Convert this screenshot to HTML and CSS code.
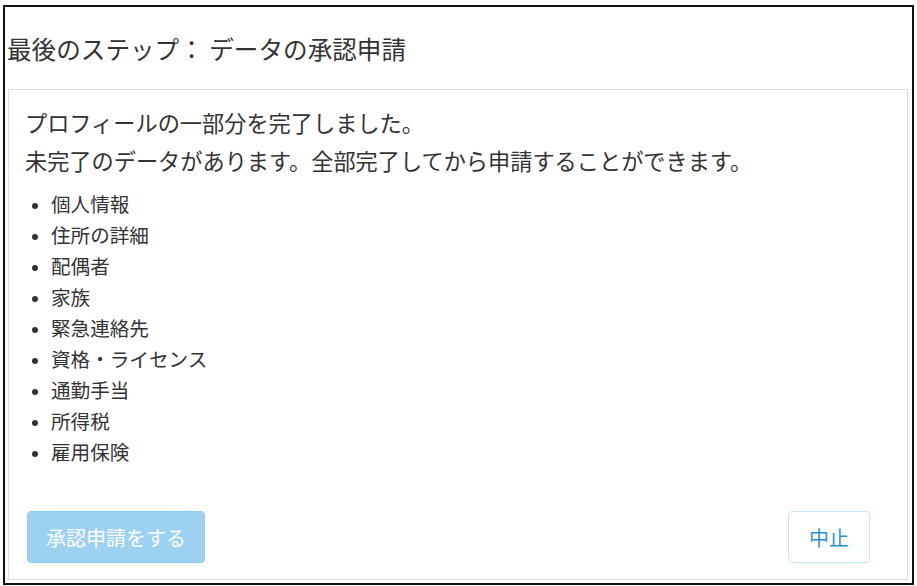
FILE: index.html
```html
<!DOCTYPE html>
<html lang="ja">
<head>
    <meta charset="UTF-8">
    <meta name="viewport" content="width=device-width, initial-scale=1.0">
    <title>最後のステップ</title>
    <link rel="stylesheet" href="styles.css">
</head>
<body>
    <div class="frame">
        <h2 class="title">最後のステップ： データの承認申請</h2>
        <div class="panel">
            <p class="msg">プロフィールの一部分を完了しました。</p>
            <p class="msg">未完了のデータがあります。全部完了してから申請することができます。</p>
            <ul class="missing">
                <li>個人情報</li>
                <li>住所の詳細</li>
                <li>配偶者</li>
                <li>家族</li>
                <li>緊急連絡先</li>
                <li>資格・ライセンス</li>
                <li>通勤手当</li>
                <li>所得税</li>
                <li>雇用保険</li>
            </ul>
            <div class="actions">
                <button type="button" class="primary" disabled>承認申請をする</button>
                <button type="button" class="secondary">中止</button>
            </div>
        </div>
    </div>
</body>
</html>
```

FILE: styles.css
```css
body {
    font-family: "Noto Sans CJK JP", "Noto Sans", sans-serif;
    color: #333;
    background-color: #fff;
    margin: 0;
}
.frame {
    margin: 5px 3px 0 3px;
    height: 580px;
    box-sizing: border-box;
    border: 2px solid #111;
    padding: 0 4px 3px 3px;
    display: flex;
    flex-direction: column;
}
.title {
    height: 82px;
    margin: 0 0 0 -1px;
    display: flex;
    align-items: center;
    font-size: 24.6px;
    font-weight: normal;
    color: #333;
}
.panel {
    flex: 1;
    border: 1px solid #ddd;
    padding: 13px 0 16px 16px;
    display: flex;
    flex-direction: column;
}
.msg {
    margin: 0;
    font-size: 22.2px;
    line-height: 38px;
}
.missing {
    margin: 9px 0 0 0;
    padding: 0 0 0 26px;
    font-size: 19.6px;
    line-height: 31px;
}
.missing li::marker {
    font-size: 16px;
}
.actions {
    margin-top: auto;
    display: flex;
    justify-content: space-between;
    padding: 0 37px 0 2px;
}
button {
    font-family: inherit;
    font-size: 20px;
    height: 52px;
    border-radius: 4px;
    cursor: pointer;
}
button.primary {
    width: 178px;
    background-color: #9dd1f1;
    border: 1px solid #94cbed;
    color: #fff;
}
button.secondary {
    width: 82px;
    background-color: #fff;
    border: 1px solid #c5e6f7;
    color: #2b90d9;
}
```
